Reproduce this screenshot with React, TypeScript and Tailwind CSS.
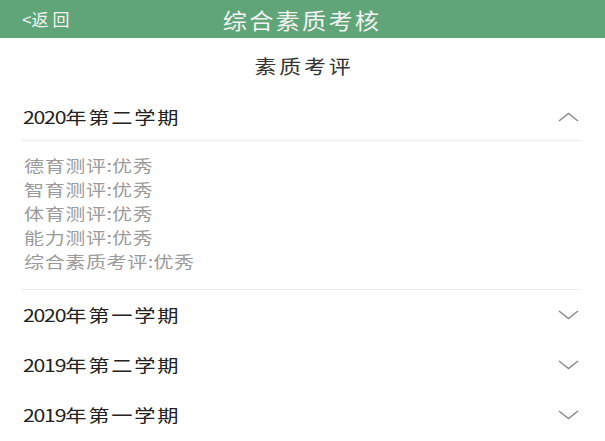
import React, { useState } from "react"

const font = { fontFamily: '"Noto Sans CJK SC", "Noto Sans", sans-serif' }

interface Term {
  id: number
  name: string
  items: string[]
}

const terms: Term[] = [
  {
    id: 1,
    name: "2020年第二学期",
    items: ["德育测评:优秀", "智育测评:优秀", "体育测评:优秀", "能力测评:优秀", "综合素质考评:优秀"],
  },
  { id: 2, name: "2020年第一学期", items: [] },
  { id: 3, name: "2019年第二学期", items: [] },
  { id: 4, name: "2019年第一学期", items: [] },
]

// splits ascii runs from CJK runs so each gets its own letter spacing
function Spaced({ text, ascii, cjk }: { text: string; ascii: string; cjk: string }) {
  const parts = text.match(/[\x00-\x7f]+|[^\x00-\x7f]+/g) || []
  return (
    <>
      {parts.map((p, i) => (
        <span key={i} className={/^[\x00-\x7f]/.test(p) ? ascii : cjk}>
          {p}
        </span>
      ))}
    </>
  )
}

function Chevron({ up }: { up: boolean }) {
  return (
    <svg width="21" height="10" viewBox="0 0 21 10" className="shrink-0 mr-[1px]">
      <path
        d={up ? "M1 9 L10.5 1.5 L20 9" : "M1 1 L10.5 8.5 L20 1"}
        fill="none"
        stroke="#8a8a8a"
        strokeWidth="1.5"
      />
    </svg>
  )
}

export default function App() {
  const [open, setOpen] = useState<number | null>(1)

  return (
    <div className="w-[605px] h-[441px] overflow-hidden bg-white" style={font}>
      {/* 顶部栏 */}
      <div className="h-[38px] bg-[#5fa577] flex items-center relative">
        <span className="pl-[22px] text-[17px] text-[#f2f2f2]">
          <Spaced text="<返回" ascii="tracking-[0px]" cjk="tracking-[4px]" />
        </span>
        <span className="absolute left-0 right-0 text-center pointer-events-none">
          <span className="inline-block scale-x-[1.1] text-[22px] text-[#f2f2f2] tracking-[2px]">综合素质考核</span>
        </span>
      </div>

      <div className="h-[56px] flex items-center justify-center pl-[4px]">
        <span className="inline-block scale-x-[1.15] text-[19px] text-[#333] tracking-[2.5px]">素质考评</span>
      </div>

      <div className="pl-[23px] pr-[25px]">
        {terms.map((t) => {
          const isOpen = open === t.id
          return (
            <div key={t.id}>
              <div
                onClick={() => setOpen(isOpen ? null : t.id)}
                className={`flex items-center justify-between cursor-pointer ${
                  isOpen ? "h-[47px] border-b border-[#ececec] -ml-[1px] pl-[1px]" : "h-[50px]"
                }`}
              >
                <span className="inline-block origin-left scale-x-[1.25] text-[17px] text-[#222] whitespace-nowrap">
                  <Spaced text={t.name} ascii="tracking-[-1px]" cjk="tracking-[1.4px]" />
                </span>
                <Chevron up={isOpen} />
              </div>
              {isOpen && (
                <div className="pt-[12px] pb-[16px] border-b border-[#ececec] -ml-[1px] pl-[2px]">
                  {t.items.map((it) => (
                    <div key={it} className="h-[24px] leading-[24px] text-[16px] text-[#9a9a9a]">
                      <span className="inline-block origin-left scale-x-[1.25] whitespace-nowrap">
                        <Spaced text={it} ascii="tracking-[0px]" cjk="tracking-[0.5px]" />
                      </span>
                    </div>
                  ))}
                </div>
              )}
            </div>
          )
        })}
      </div>
    </div>
  )
}
